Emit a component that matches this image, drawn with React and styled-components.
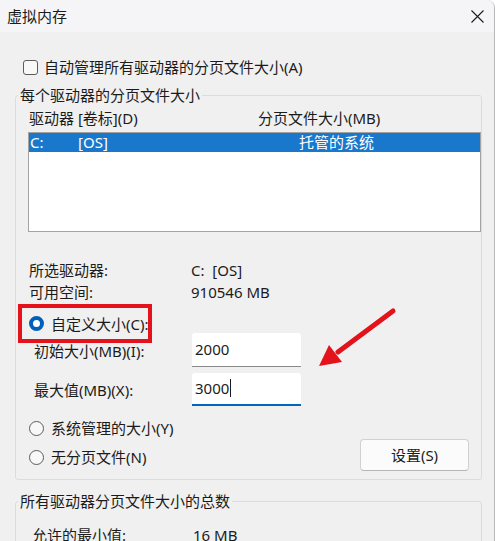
import React from 'react';
import styled, { createGlobalStyle } from 'styled-components';

// --- 全局样式 --- //

const GlobalStyle = createGlobalStyle`
  html, body {
    margin: 0;
    padding: 0;
    background: #ffffff;
  }
  * {
    box-sizing: border-box;
  }
`;

// --- 窗口外框 --- //

const Window = styled.div`
  position: relative;
  width: 495px;
  height: 541px;
  overflow: hidden;
  background: #f0f0f0;
  border-right: 1px solid #b9b9b9;
  border-top-right-radius: 8px;
  font-family: "Noto Sans", "Noto Sans CJK SC", sans-serif;
  font-size: 15px;
  color: #1b1b1b;
`;

const TitleBar = styled.div`
  height: 32px;
  display: flex;
  align-items: center;
  justify-content: space-between;
  padding: 0 10px 0 7px;
  background: #f5f5f8;
  line-height: 20px;
`;

const CloseButton = styled.div`
  display: flex;
  align-items: center;
  justify-content: center;
  width: 14px;
  height: 14px;
`;

const Content = styled.div`
  padding: 0 12px 0 15px;
`;

// --- 复选框 / 单选框 --- //

const CheckRow = styled.label`
  margin-top: 24px;
  height: 22px;
  display: flex;
  align-items: center;
  gap: 6px;
  padding-left: 8px;
  line-height: 22px;
`;

const CheckBox = styled.span`
  width: 15px;
  height: 15px;
  border: 1px solid #5c5c5c;
  border-radius: 3px;
  background: #f8f8f8;
`;

const RadioRow = styled.label`
  height: 22px;
  display: flex;
  align-items: center;
  gap: 7px;
  line-height: 22px;
`;

const Radio = styled.span`
  flex: none;
  width: 15px;
  height: 15px;
  border-radius: 50%;
  border: ${(p) => (p.$checked ? '4px solid #005fb8' : '1px solid #5c5c5c')};
  background: ${(p) => (p.$checked ? '#ffffff' : '#f8f8f8')};
`;

// 红色标注框
const HighlightRow = styled(RadioRow)`
  margin-top: 10px;
  margin-left: -2px;
  padding-left: 2px;
  width: 116px;
  height: 21px;
  white-space: nowrap;
  outline: 4px solid #e3121b;
  outline-offset: 5px;
`;

// --- 分组框 --- //

const GroupBox = styled.fieldset`
  margin: ${(p) => p.$top}px 0 0 0;
  padding: 0 0 ${(p) => p.$bottom}px 13px;
  border: 1px solid #dcdcdc;
  border-radius: 3px;
  min-width: 0;
`;

const Legend = styled.legend`
  margin-left: -11px;
  padding: 0 2px;
  line-height: 20px;
`;

const ColumnHeader = styled.div`
  margin-top: 3px;
  display: grid;
  grid-template-columns: 229px 1fr;
  line-height: 20px;
`;

const ListBox = styled.div`
  margin: 4px 0 0 -1px;
  height: 100px;
  border: 1px solid #a3a3a3;
  background: #ffffff;
`;

const ListRow = styled.div`
  height: 19px;
  display: grid;
  grid-template-columns: 48px 221px 1fr;
  padding-left: 1px;
  line-height: 19px;
  background: ${(p) => (p.$selected ? '#1a78cc' : 'transparent')};
  color: ${(p) => (p.$selected ? '#ffffff' : 'inherit')};
`;

const InfoGrid = styled.div`
  margin-top: ${(p) => p.$top}px;
  padding-left: ${(p) => p.$indent || 0}px;
  display: grid;
  grid-template-columns: ${(p) => p.$col}px 1fr;
  line-height: 22px;
`;

const SizeGrid = styled.div`
  margin-top: -1px;
  padding-left: 5px;
  display: grid;
  grid-template-columns: 158px 109px;
  grid-template-rows: 34px 33px;
  row-gap: 6px;
  align-items: center;
`;

const TextBox = styled.div`
  height: 100%;
  display: flex;
  align-items: center;
  padding: 0 0 2px 3px;
  background: #ffffff;
  border-bottom: ${(p) => (p.$focused ? '2px solid #0067c0' : '1px solid #8a8a8a')};
  border-radius: 3px 3px 0 0;
  line-height: 20px;
`;

const Caret = styled.span`
  display: inline-block;
  width: 1px;
  height: 18px;
  margin-left: 1px;
  background: #1b1b1b;
`;

const BottomRow = styled.div`
  margin-top: 11px;
  padding-right: 12px;
  display: flex;
  justify-content: space-between;
  align-items: flex-end;
`;

const RadioList = styled.div`
  display: flex;
  flex-direction: column;
  gap: 7px;
  padding-bottom: 3px;
`;

const Button = styled.button`
  width: 109px;
  height: 32px;
  border: 1px solid #d1d1d1;
  border-bottom-color: #b5b5b5;
  border-radius: 4px;
  background: #fbfbfb;
  font: inherit;
  color: inherit;
  line-height: 20px;
`;

// 红色箭头（标注）
const Arrow = styled.svg`
  position: absolute;
  left: 310px;
  top: 300px;
`;

export default function App() {
  return (
    <>
      <GlobalStyle />
      <Window>
        <TitleBar>
          <span>虚拟内存</span>
          <CloseButton>
            <svg width="13" height="13" viewBox="0 0 13 13">
              <path d="M0.5 0.5 L12.5 12.5 M12.5 0.5 L0.5 12.5" stroke="#1b1b1b" strokeWidth="1.1" />
            </svg>
          </CloseButton>
        </TitleBar>

        <Content>
          <CheckRow>
            <CheckBox />
            <span>自动管理所有驱动器的分页文件大小(A)</span>
          </CheckRow>

          <GroupBox $top={7} $bottom={8}>
            <Legend>每个驱动器的分页文件大小</Legend>
            <ColumnHeader>
              <span>驱动器 [卷标](D)</span>
              <span>分页文件大小(MB)</span>
            </ColumnHeader>
            <ListBox>
              <ListRow $selected>
                <span>C:</span>
                <span>[OS]</span>
                <span>托管的系统</span>
              </ListRow>
            </ListBox>

            <InfoGrid $top={27} $col={162}>
              <span>所选驱动器:</span>
              <span>C:&nbsp;&nbsp;[OS]</span>
              <span>可用空间:</span>
              <span>910546 MB</span>
            </InfoGrid>

            <HighlightRow>
              <Radio $checked />
              <span>自定义大小(C):</span>
            </HighlightRow>

            <SizeGrid>
              <span>初始大小(MB)(I):</span>
              <TextBox>2000</TextBox>
              <span>最大值(MB)(X):</span>
              <TextBox $focused>
                3000<Caret />
              </TextBox>
            </SizeGrid>

            <BottomRow>
              <RadioList>
                <RadioRow>
                  <Radio />
                  <span>系统管理的大小(Y)</span>
                </RadioRow>
                <RadioRow>
                  <Radio />
                  <span>无分页文件(N)</span>
                </RadioRow>
              </RadioList>
              <Button>设置(S)</Button>
            </BottomRow>
          </GroupBox>

          <GroupBox $top={11} $bottom={20}>
            <Legend>所有驱动器分页文件大小的总数</Legend>
            <InfoGrid $top={13} $col={161} $indent={3}>
              <span>允许的最小值:</span>
              <span>16 MB</span>
            </InfoGrid>
          </GroupBox>
        </Content>

        <Arrow width="100" height="80" viewBox="0 0 100 80">
          <line x1="83" y1="11" x2="28" y2="52" stroke="#e3121b" strokeWidth="5" strokeLinecap="round" />
          <polygon points="9,66 19,45 32,62" fill="#e3121b" />
        </Arrow>
      </Window>
    </>
  );
}
